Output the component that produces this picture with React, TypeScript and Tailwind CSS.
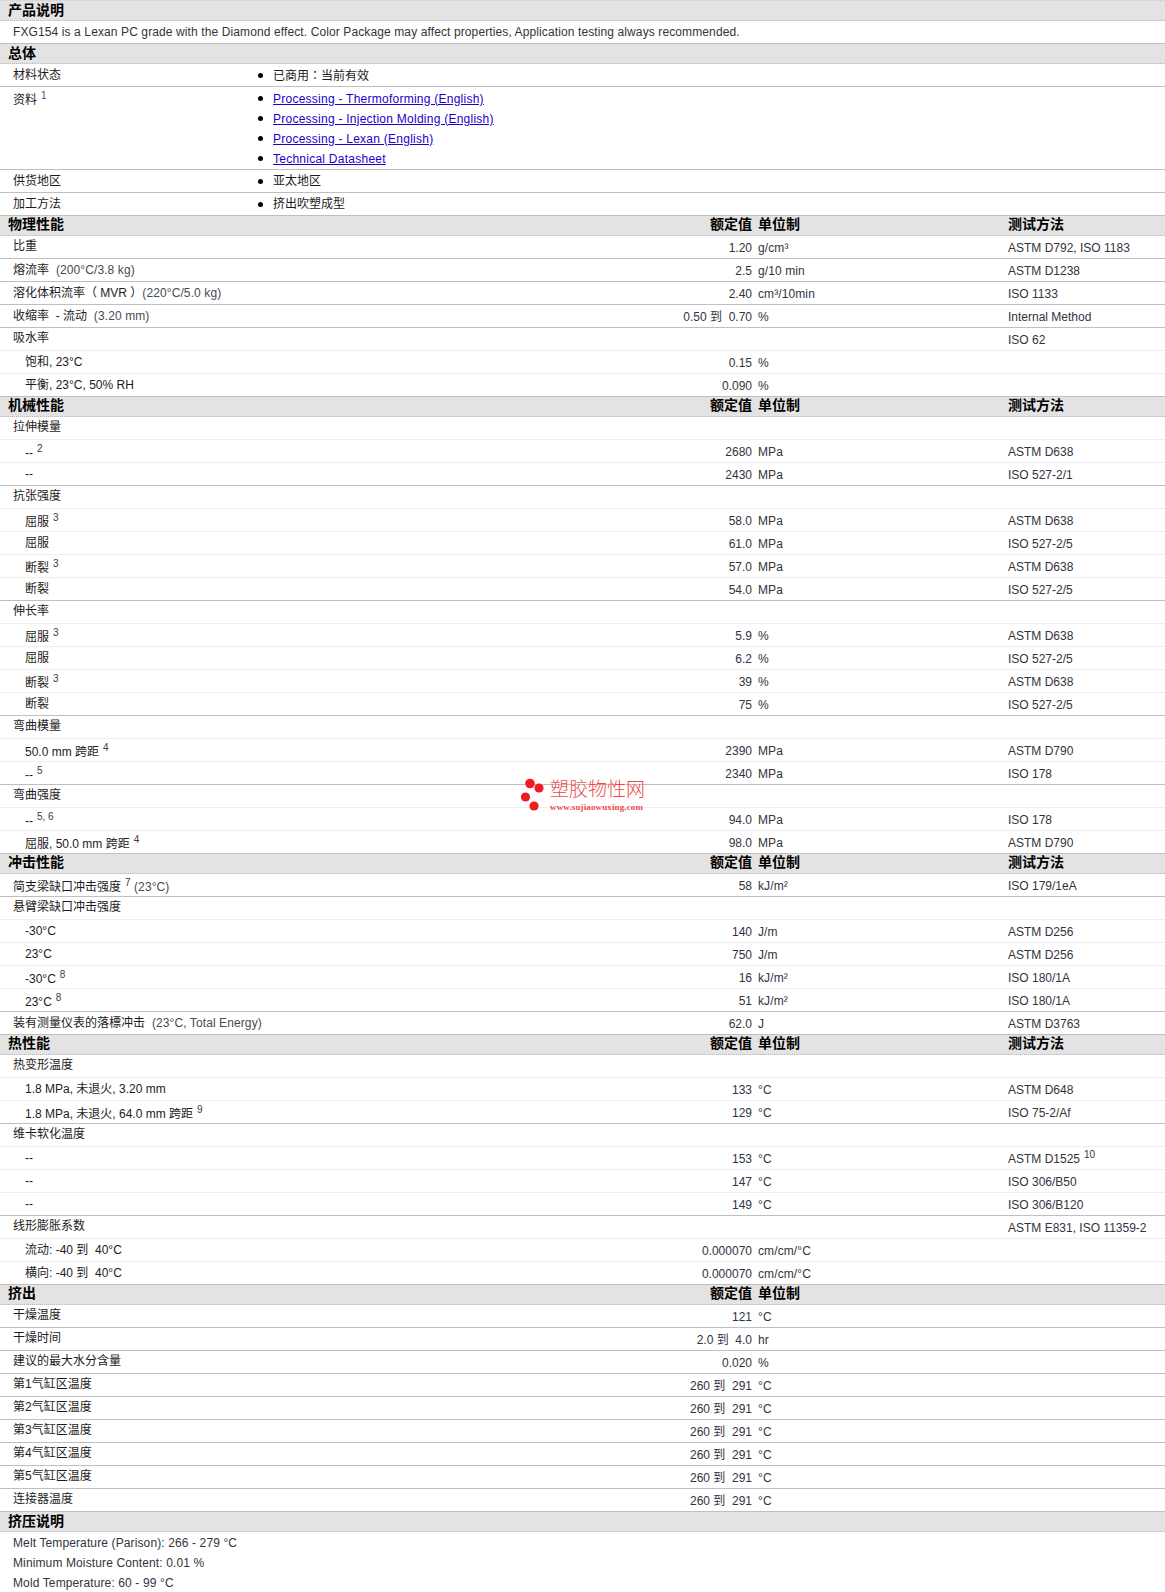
type Row = {
  label?: string;
  sup?: string;
  after?: string;
  value?: string;
  unit?: string;
  method?: string;
  methodSup?: string;
  sub?: boolean;
};

type Section = {
  title: string;
  method?: boolean;
  rows: Row[];
};

const links = [
  'Processing - Thermoforming (English)',
  'Processing - Injection Molding (English)',
  'Processing - Lexan (English)',
  'Technical Datasheet',
];

const sections: Section[] = [
  {
    title: '物理性能',
    method: true,
    rows: [
      { label: '比重', value: '1.20', unit: 'g/cm³', method: 'ASTM D792, ISO 1183' },
      { label: '熔流率', after: '  (200°C/3.8 kg)', value: '2.5', unit: 'g/10 min', method: 'ASTM D1238' },
      { label: '溶化体积流率（ MVR ）', after: '(220°C/5.0 kg)', value: '2.40', unit: 'cm³/10min', method: 'ISO 1133' },
      { label: '收缩率  - 流动', after: '  (3.20 mm)', value: '0.50 到  0.70', unit: '%', method: 'Internal Method' },
      { label: '吸水率', method: 'ISO 62' },
      { label: '饱和, 23°C', value: '0.15', unit: '%', sub: true },
      { label: '平衡, 23°C, 50% RH', value: '0.090', unit: '%', sub: true },
    ],
  },
  {
    title: '机械性能',
    method: true,
    rows: [
      { label: '拉伸模量' },
      { label: '--', sup: '2', value: '2680', unit: 'MPa', method: 'ASTM D638', sub: true },
      { label: '--', value: '2430', unit: 'MPa', method: 'ISO 527-2/1', sub: true },
      { label: '抗张强度' },
      { label: '屈服', sup: '3', value: '58.0', unit: 'MPa', method: 'ASTM D638', sub: true },
      { label: '屈服', value: '61.0', unit: 'MPa', method: 'ISO 527-2/5', sub: true },
      { label: '断裂', sup: '3', value: '57.0', unit: 'MPa', method: 'ASTM D638', sub: true },
      { label: '断裂', value: '54.0', unit: 'MPa', method: 'ISO 527-2/5', sub: true },
      { label: '伸长率' },
      { label: '屈服', sup: '3', value: '5.9', unit: '%', method: 'ASTM D638', sub: true },
      { label: '屈服', value: '6.2', unit: '%', method: 'ISO 527-2/5', sub: true },
      { label: '断裂', sup: '3', value: '39', unit: '%', method: 'ASTM D638', sub: true },
      { label: '断裂', value: '75', unit: '%', method: 'ISO 527-2/5', sub: true },
      { label: '弯曲模量' },
      { label: '50.0 mm 跨距', sup: '4', value: '2390', unit: 'MPa', method: 'ASTM D790', sub: true },
      { label: '--', sup: '5', value: '2340', unit: 'MPa', method: 'ISO 178', sub: true },
      { label: '弯曲强度' },
      { label: '--', sup: '5, 6', value: '94.0', unit: 'MPa', method: 'ISO 178', sub: true },
      { label: '屈服, 50.0 mm 跨距', sup: '4', value: '98.0', unit: 'MPa', method: 'ASTM D790', sub: true },
    ],
  },
  {
    title: '冲击性能',
    method: true,
    rows: [
      { label: '简支梁缺口冲击强度', sup: '7', after: ' (23°C)', value: '58', unit: 'kJ/m²', method: 'ISO 179/1eA' },
      { label: '悬臂梁缺口冲击强度' },
      { label: '-30°C', value: '140', unit: 'J/m', method: 'ASTM D256', sub: true },
      { label: '23°C', value: '750', unit: 'J/m', method: 'ASTM D256', sub: true },
      { label: '-30°C', sup: '8', value: '16', unit: 'kJ/m²', method: 'ISO 180/1A', sub: true },
      { label: '23°C', sup: '8', value: '51', unit: 'kJ/m²', method: 'ISO 180/1A', sub: true },
      { label: '装有测量仪表的落標冲击', after: '  (23°C, Total Energy)', value: '62.0', unit: 'J', method: 'ASTM D3763' },
    ],
  },
  {
    title: '热性能',
    method: true,
    rows: [
      { label: '热变形温度' },
      { label: '1.8 MPa, 未退火, 3.20 mm', value: '133', unit: '°C', method: 'ASTM D648', sub: true },
      { label: '1.8 MPa, 未退火, 64.0 mm 跨距', sup: '9', value: '129', unit: '°C', method: 'ISO 75-2/Af', sub: true },
      { label: '维卡软化温度' },
      { label: '--', value: '153', unit: '°C', method: 'ASTM D1525', methodSup: '10', sub: true },
      { label: '--', value: '147', unit: '°C', method: 'ISO 306/B50', sub: true },
      { label: '--', value: '149', unit: '°C', method: 'ISO 306/B120', sub: true },
      { label: '线形膨胀系数', method: 'ASTM E831, ISO 11359-2' },
      { label: '流动: -40 到  40°C', value: '0.000070', unit: 'cm/cm/°C', sub: true },
      { label: '横向: -40 到  40°C', value: '0.000070', unit: 'cm/cm/°C', sub: true },
    ],
  },
  {
    title: '挤出',
    rows: [
      { label: '干燥温度', value: '121', unit: '°C' },
      { label: '干燥时间', value: '2.0 到  4.0', unit: 'hr' },
      { label: '建议的最大水分含量', value: '0.020', unit: '%' },
      { label: '第1气缸区温度', value: '260 到  291', unit: '°C' },
      { label: '第2气缸区温度', value: '260 到  291', unit: '°C' },
      { label: '第3气缸区温度', value: '260 到  291', unit: '°C' },
      { label: '第4气缸区温度', value: '260 到  291', unit: '°C' },
      { label: '第5气缸区温度', value: '260 到  291', unit: '°C' },
      { label: '连接器温度', value: '260 到  291', unit: '°C' },
    ],
  },
];

const SectionHeader = ({ title, method, columns, top }: { title: string; method?: boolean; columns?: boolean; top?: boolean }) => (
  <div
    className={`grid grid-cols-[480px_272px_256px_1fr] items-center border-b border-dotted border-b-[#b9b9c8] bg-[#e4e3e3] text-[14px] font-bold leading-[17px] text-black ${
      top ? 'h-[21px] border-t border-t-[#cccccc]' : 'h-[20px]'
    } ${columns ? 'pb-[2px]' : ''}`}
  >
    <div className="pl-[8px]">{title}</div>
    <div className="text-right">{columns ? '额定值' : ''}</div>
    <div className="pl-[6px]">{columns ? '单位制' : ''}</div>
    <div>{method ? '测试方法' : ''}</div>
  </div>
);

const DataRow = ({ row, strong }: { row: Row; strong: boolean }) => (
  <div
    className={`grid h-[23px] grid-cols-[480px_272px_256px_1fr] border-b text-[12px] leading-[22px] ${
      strong ? 'border-b-[#bfbfbf]' : 'border-b-[#eeeef0]'
    }`}
  >
    <div
      className={`whitespace-pre text-[#1c1c1c] ${row.sub ? 'pl-[25px]' : 'pl-[13px]'} ${
        row.sup ? 'pt-[2px]' : row.sub || row.after ? '' : '-mt-[1px]'
      }`}
    >
      {row.label}
      {row.sup && <sup className="top-[-5px] ml-[4px] text-[10px] text-[#3a3a45]">{row.sup}</sup>}
      {row.after && <span className="tracking-[0.1px] text-[#4a4a55]">{row.after}</span>}
    </div>
    <div className="whitespace-pre pt-[1px] text-right text-[#33333d]">{row.value}</div>
    <div className="pl-[6px] pt-[1px] tracking-[0.1px] text-[#33333d]">{row.unit}</div>
    <div className="pt-[1px] text-[#33333d]">
      {row.method}
      {row.methodSup && <sup className="top-[-5px] ml-[4px] text-[10px]">{row.methodSup}</sup>}
    </div>
  </div>
);

const Bullet = ({ children }: { children: React.ReactNode }) => (
  <div className="flex h-[20px] items-center gap-[10px]">
    <span className="h-[5px] w-[5px] rounded-full bg-black" />
    {children}
  </div>
);

const InfoRow = ({ label, sup, children }: { label: string; sup?: string; children: React.ReactNode }) => (
  <div className="grid grid-cols-[258px_1fr] border-b border-b-[#bfbfbf] pb-[1px] pt-[1px] text-[12px] leading-[20px] text-[#1c1c1c]">
    <div className={`pl-[13px] ${sup ? 'pt-[2px]' : ''}`}>
      {label}
      {sup && <sup className="top-[-5px] ml-[4px] text-[10px] text-[#7a2a8a]">{sup}</sup>}
    </div>
    <div>{children}</div>
  </div>
);

export default function App() {
  return (
    <div className="relative h-[1592px] w-[1165px] overflow-hidden bg-white font-['Liberation_Sans','Noto_Sans_CJK_SC',sans-serif] text-[#2f2f2f]">
      <SectionHeader title="产品说明" top />
      <div className="h-[23px] border-b border-b-[#bfbfbf] pl-[13px] pt-px text-[12px] leading-[21px] tracking-[0.11px] text-[#33333d]">
        FXG154 is a Lexan PC grade with the Diamond effect. Color Package may affect properties, Application testing always recommended.
      </div>

      <SectionHeader title="总体" />
      <InfoRow label="材料状态">
        <Bullet>
          <span className="font-['Noto_Sans_CJK_TC',sans-serif]">已商用：当前有效</span>
        </Bullet>
      </InfoRow>
      <InfoRow label="资料" sup="1">
        {links.map((link) => (
          <Bullet key={link}>
            <a className="pt-px tracking-[0.25px] text-[#2200cc] underline">{link}</a>
          </Bullet>
        ))}
      </InfoRow>
      <InfoRow label="供货地区">
        <Bullet>亚太地区</Bullet>
      </InfoRow>
      <InfoRow label="加工方法">
        <Bullet>挤出吹塑成型</Bullet>
      </InfoRow>

      {sections.map((section) => (
        <div key={section.title}>
          <SectionHeader title={section.title} method={section.method} columns />
          {section.rows.map((row, i) => (
            <DataRow key={i} row={row} strong={!section.rows[i + 1]?.sub} />
          ))}
        </div>
      ))}

      <SectionHeader title="挤压说明" />
      <div className="pl-[13px] pt-px text-[12px] leading-[20px] tracking-[0.12px] text-[#33333d]">
        <div>Melt Temperature (Parison): 266 - 279 °C</div>
        <div>Minimum Moisture Content: 0.01 %</div>
        <div>Mold Temperature: 60 - 99 °C</div>
      </div>

      {/* watermark */}
      <div className="absolute left-[520px] top-[778px] flex">
        <svg width="29" height="36" viewBox="0 0 29 36" className="shrink-0">
          <circle cx="10" cy="5.5" r="4.8" fill="#ee1c25" />
          <circle cx="19" cy="10" r="4.6" fill="#ee1c25" />
          <circle cx="5.5" cy="19" r="4.6" fill="#ee1c25" />
          <circle cx="14" cy="28" r="4.6" fill="#ee1c25" />
        </svg>
        <div className="pl-px text-[#f0484c]">
          <div className="text-[19px] font-light leading-[24px]">塑胶物性网</div>
          <div className="font-['Liberation_Serif',serif] text-[9px] font-bold leading-[10px] tracking-[0.13px]">www.sujiaowuxing.com</div>
        </div>
      </div>
    </div>
  );
}
